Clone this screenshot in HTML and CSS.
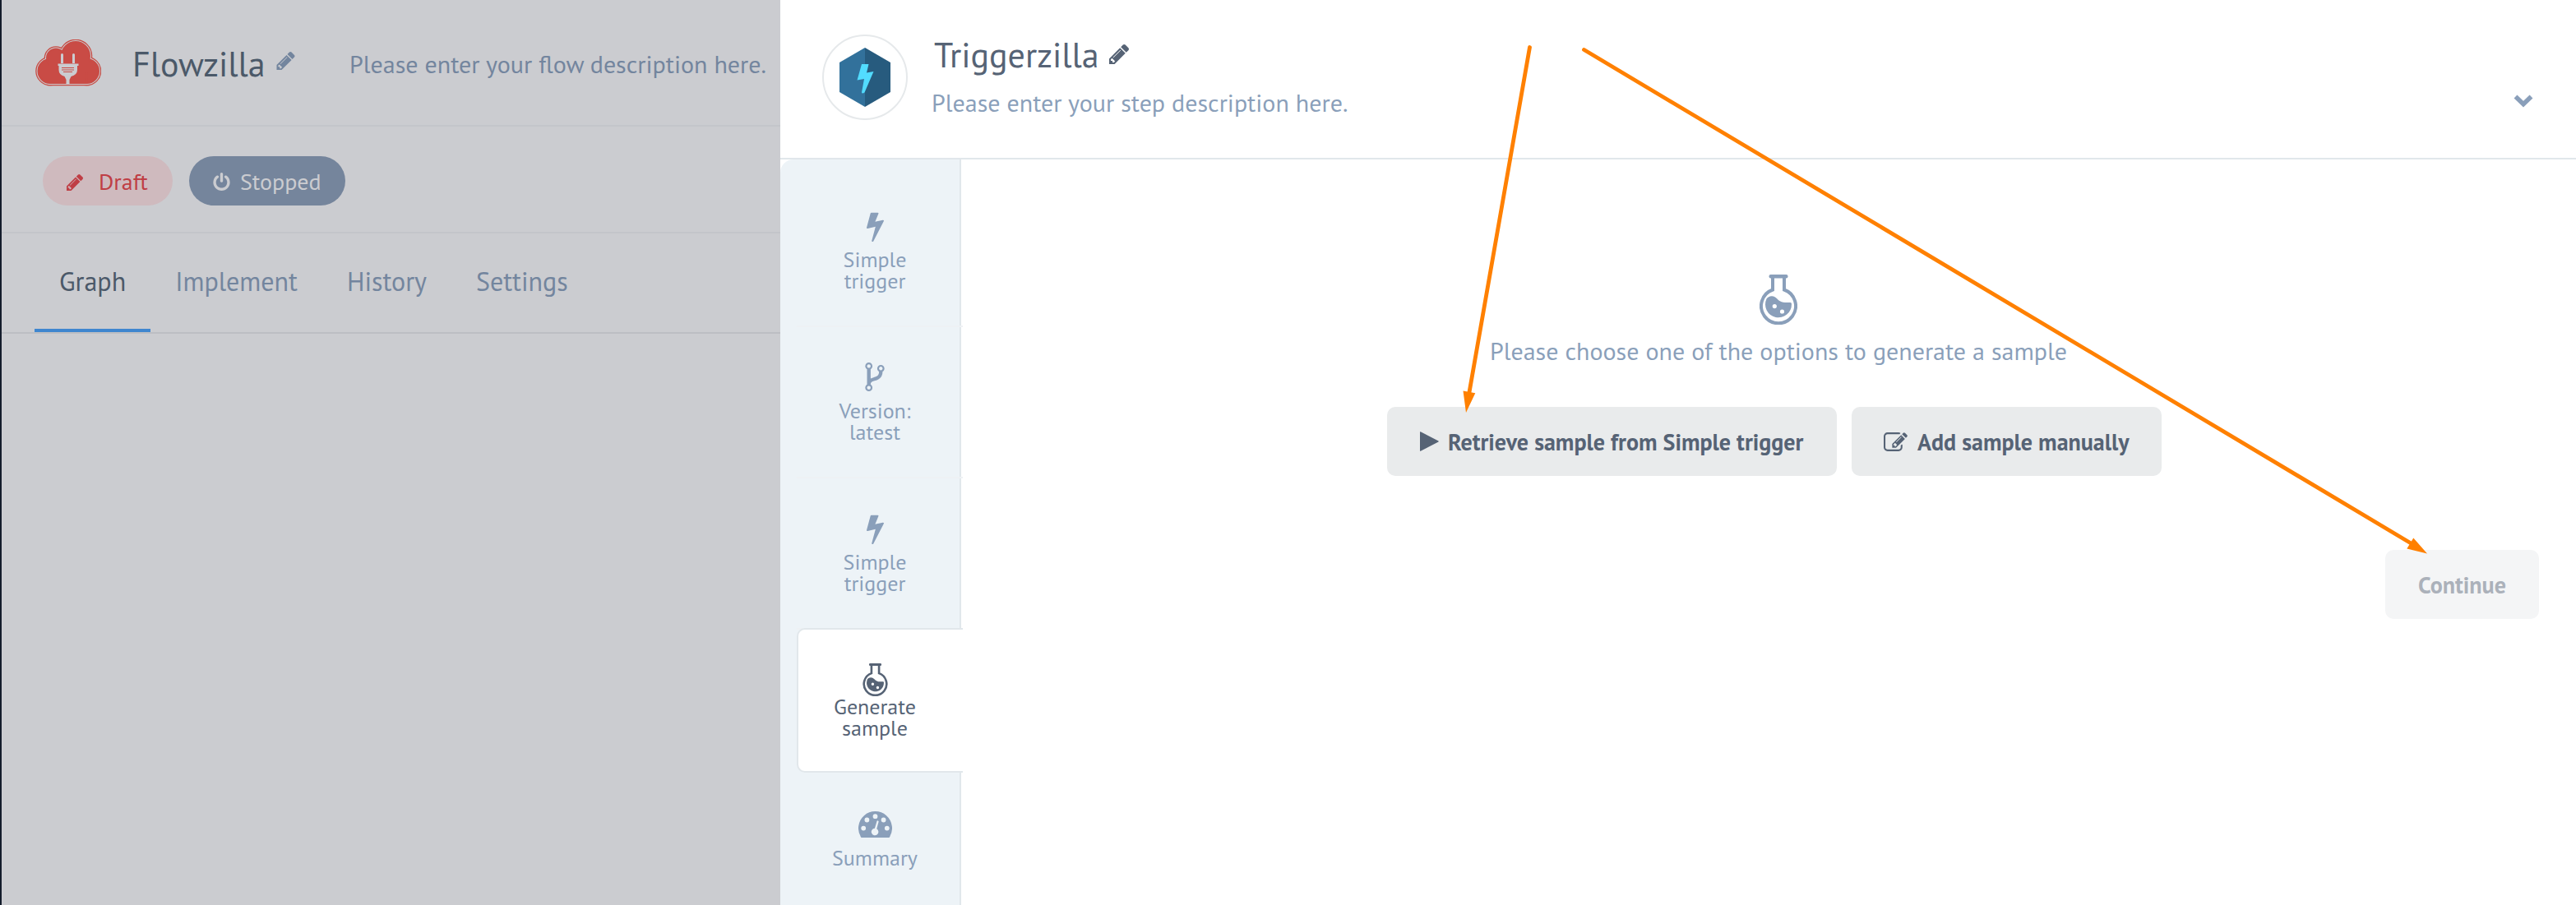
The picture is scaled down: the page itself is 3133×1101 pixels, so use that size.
FILE: index.html
```html
<!DOCTYPE html>
<html lang="en">
<head>
<meta charset="utf-8">
<title>Flowzilla</title>
<link rel="stylesheet" href="styles.css">
</head>
<body>
<svg class="defs" width="0" height="0" aria-hidden="true">
  <defs>
    <symbol id="pencil" viewBox="128 149 1516 1515"><path d="M491 1536l91-91-235-235-91 91v107h128v128h107zm523-928q0-22-22-22-10 0-17 7l-542 542q-7 7-7 17 0 22 22 22 10 0 17-7l542-542q7-7 7-17zm-54-192l416 416-832 832h-416v-416zm683 96q0 53-37 90l-166 166-416-416 166-165q36-38 90-38 53 0 91 38l235 234q37 39 37 91z"/></symbol>
    <symbol id="bolt" viewBox="448 0 897 1792" preserveAspectRatio="none"><path d="M1333 566q18 20 7 44l-540 1157q-13 25-42 25-4 0-14-2-17-5-25.500-19t-4.500-30l197-808-406 101q-4 1-12 1-18 0-31-11-18-15-13-39l201-825q4-14 16-23t28-9h328q19 0 32 12.500t13 29.500q0 8-5 18l-171 463 396-98q8-2 12-2 19 0 34 15z"/></symbol>
    <symbol id="fork" viewBox="384 128 1024 1536"><path d="M672 1472q0-40-28-68t-68-28-68 28-28 68 28 68 68 28 68-28 28-68zm0-1152q0-40-28-68t-68-28-68 28-28 68 28 68 68 28 68-28 28-68zm640 128q0-40-28-68t-68-28-68 28-28 68 28 68 68 28 68-28 28-68zm96 0q0 52-26 96.500t-70 69.500q-2 287-226 414-67 38-203 81-128 40-169.500 71t-41.500 100v26q44 25 70 69.500t26 96.500q0 80-56 136t-136 56-136-56-56-136q0-52 26-96.500t70-69.500v-820q-44-25-70-69.500t-26-96.500q0-80 56-136t136-56 136 56 56 136q0 52-26 96.500t-70 69.500v497q54-26 154-57 55-17 87.500-29.500t70.500-31 59-39.500 40.500-51 28-69.500 8.500-91.500q-44-25-70-69.500t-26-96.500q0-80 56-136t136-56 136 56 56 136z"/></symbol>
    <symbol id="power" viewBox="128 0 1536 1664"><path d="M1664 896q0 156-61 298t-164 245-245 164-298 61-298-61-245-164-164-245-61-298q0-182 80.500-343t226.500-270q43-32 95.500-25t83.500 50q32 42 24.500 94.500t-49.500 84.500q-98 74-151.500 181t-53.500 228q0 104 40.500 198.500t109.500 163.500 163.500 109.500 198.500 40.500 198.500-40.500 163.500-109.500 109.500-163.500 40.500-198.500q0-121-53.500-228t-151.500-181q-42-32-49.500-84.500t24.500-94.500q31-43 84-50t95 25q146 109 226.500 270t80.500 343zm-640-768v640q0 52-38 90t-90 38-90-38-38-90v-640q0-52 38-90t90-38 90 38 38 90z"/></symbol>
    <symbol id="edit" viewBox="0 128 1792 1408"><path d="M888 1184l116-116-152-152-116 116v56h96v96h56zm440-720q-16-16-33 1l-350 350q-17 17-1 33t33-1l350-350q17-17 1-33zm80 594v190q0 119-84.500 203.500t-203.500 84.500h-832q-119 0-203.500-84.500t-84.500-203.500v-832q0-119 84.500-203.500t203.500-84.500h832q63 0 117 25 15 7 18 23 3 17-9 29l-49 49q-14 14-32 8-23-6-45-6h-832q-66 0-113 47t-47 113v832q0 66 47 113t113 47h832q66 0 113-47t47-113v-126q0-13 9-22l64-64q15-15 35-7t20 29zm-96-738l288 288-672 672h-288v-288zm444 132l-92 92-288-288 92-92q28-28 68-28t68 28l152 152q28 28 28 68t-28 68z"/></symbol>
    <symbol id="flask" viewBox="0 0 46 61">
      <path d="M16 3V18.500A21 21 0 1 0 30 18.500V3" fill="none" stroke="currentColor" stroke-width="4"/>
      <rect x="11.500" y="0" width="23" height="4.600" rx="2"/>
      <path fill-rule="evenodd" d="M8.500 29.500C10.500 26.500 15 24.800 19 27.500C22.500 30 24.500 34 31 34H37.500Q39 34 39 36A16 16 0 1 1 8.500 29.500ZM18.300 36a2.600 2.600 0 1 0 0 5.200a2.600 2.600 0 1 0 0-5.200ZM27.500 42.400a2.600 2.600 0 1 0 0 5.200a2.600 2.600 0 1 0 0-5.200Z"/>
    </symbol>
    <symbol id="gauge" viewBox="0 0 41 32"><path fill-rule="evenodd" d="M3.500 32A20.500 20.500 0 1 1 37.500 32ZM20.500 3.300a2.900 2.900 0 1 0 0 5.800a2.900 2.900 0 1 0 0-5.800ZM10.400 7.600a2.900 2.900 0 1 0 0 5.800a2.900 2.900 0 1 0 0-5.800ZM30.600 7.600a2.900 2.900 0 1 0 0 5.800a2.900 2.900 0 1 0 0-5.800ZM6.200 17.700a2.900 2.900 0 1 0 0 5.800a2.900 2.900 0 1 0 0-5.800ZM34.800 17.700a2.900 2.900 0 1 0 0 5.800a2.900 2.900 0 1 0 0-5.800ZM22.400 12.300Q22.800 11.200 23.800 11.400Q24.800 11.800 24.600 12.800L22.300 21.300A4.300 4.300 0 1 1 19.900 20.700Z"/></symbol>
    <g id="cloud">
      <circle cx="18" cy="38.500" r="14.500"/><circle cx="62.500" cy="38.500" r="14.500"/><circle cx="25" cy="22.500" r="11"/><circle cx="49" cy="20" r="17"/><path d="M18 20H63V40L62.500 53H18Z"/>
    </g>
  </defs>
</svg>

<div class="app">
  <section class="flow">
    <header class="flow-head">
      <svg class="logo" viewBox="0 0 80 57">
        <use href="#cloud" fill="#c74b43" stroke="#c74b43" stroke-width="6.600"/>
        <use href="#cloud" fill="#cbccd0" stroke="#cbccd0" stroke-width="4"/>
        <use href="#cloud" fill="#c94b45" stroke="#c94b45" stroke-width="2"/>
        <path fill="#cbccd0" d="M31 18.500a1.500 1.500 0 0 1 3 0V29h-3ZM45 18.500a1.500 1.500 0 0 1 3 0V29h-3ZM27.500 29.500h25v2.500h-1.500v5q0 6-7.500 8l-2 4v6h-4v-6l-2-4q-7-2-7-8v-5h-1Z"/>
        <path stroke="#c94b45" stroke-width="1" d="M32 34.500h15M32 37h15M34 39.500h11"/>
      </svg>
      <h1 class="flow-title">Flowzilla</h1>
      <svg class="ico flow-edit"><use href="#pencil"/></svg>
      <p class="flow-desc">Please enter your flow description here.</p>
    </header>
    <div class="status">
      <span class="pill draft"><svg class="ico"><use href="#pencil"/></svg><span>Draft</span></span>
      <span class="pill stopped"><svg class="ico"><use href="#power"/></svg><span>Stopped</span></span>
    </div>
    <nav class="tabs">
      <a class="tab active">Graph</a>
      <a class="tab">Implement</a>
      <a class="tab">History</a>
      <a class="tab">Settings</a>
    </nav>
  </section>

  <section class="panel">
    <header class="panel-head">
      <div class="avatar">
        <svg viewBox="0 0 62 72"><path fill="#32719b" d="M31 0V72L0 54V18Z"/><path fill="#275b7e" d="M31 0L62 18V54L31 72Z"/><path fill="#52dcff" d="M27 20h8.500l-2.500 10.500 8.500-1.500-11 25.500q-3 2-3.500 0l3-16.500-8.500 1.500Z"/></svg>
      </div>
      <div class="step">
        <div class="step-line"><h2 class="step-title">Triggerzilla</h2><svg class="ico step-edit"><use href="#pencil"/></svg></div>
        <p class="step-desc">Please enter your step description here.</p>
      </div>
      <svg class="chevron" viewBox="0 0 24 16"><path d="M2.500 2.500L12 11.700L21.500 2.500" fill="none" stroke="currentColor" stroke-width="5.600"/></svg>
    </header>
    <div class="panel-body">
      <aside class="side">
        <div class="item"><svg class="bolt"><use href="#bolt"/></svg><span class="label">Simple<br>trigger</span></div>
        <div class="item"><svg class="fork"><use href="#fork"/></svg><span class="label">Version:<br>latest</span></div>
        <div class="item"><svg class="bolt"><use href="#bolt"/></svg><span class="label">Simple<br>trigger</span></div>
        <div class="item current"><svg class="flask"><use href="#flask"/></svg><span class="label">Generate<br>sample</span></div>
        <div class="item summary"><svg class="gauge"><use href="#gauge"/></svg><span class="label">Summary</span></div>
      </aside>
      <main class="content">
        <svg class="flask-big"><use href="#flask"/></svg>
        <p class="prompt">Please choose one of the options to generate a sample</p>
        <div class="choices">
          <button class="btn retrieve"><svg class="play" viewBox="0 0 23 24"><path d="M0 .500Q0 0 .800 .300L22.500 11.500Q23 12 22.500 12.500L.800 23.700Q0 24 0 23.500Z"/></svg><span>Retrieve sample from Simple trigger</span></button>
          <button class="btn manual"><svg class="edit"><use href="#edit"/></svg><span>Add sample manually</span></button>
        </div>
        <button class="btn continue" disabled>Continue</button>
      </main>
    </div>
  </section>
</div>

<svg class="arrows" viewBox="0 0 3133 1101">
  <path d="M1860.500 57.500L1786.500 480M1926.500 60.500L2934 662" stroke="#ff8000" stroke-width="4.800" stroke-linecap="round"/>
  <path fill="#ff8000" d="M1783 502L1779.500 475.500L1794.300 478.300ZM2952 673.500L2935.300 654.500L2927.300 667.500Z"/>
</svg>
</body>
</html>
```
FILE: styles.css
```css
* { box-sizing: border-box; }
body { margin: 0; width: 3133px; height: 1101px; overflow: hidden; background: #fff; font-family: "PT Sans", Lato, sans-serif; }
h1, h2, p { margin: 0; font-weight: 400; white-space: nowrap; }
svg { display: block; fill: currentColor; flex: none; }
.defs { position: absolute; }
.app { display: grid; grid-template-columns: 949px 1fr; height: 1101px; }

.flow { background: #cbccd0; border-left: 2px solid #141c2c; color: #73859e; overflow: hidden; }
.flow-head { display: flex; height: 154px; border-bottom: 2px solid #c3c5ca; padding-left: 41px; }
.logo { width: 80px; height: 57px; margin-top: 48px; }
.flow-title { width: 174px; margin: 53px 0 0 38px; font-size: 42px; line-height: 50px; color: #4b5969; }
.flow-edit { width: 23px; height: 22px; margin-top: 63px; margin-left: 1px; }
.flow-desc { margin: 60px 0 0 66px; font-size: 30px; line-height: 36px; }
.status { display: flex; gap: 20px; height: 130px; padding: 36px 0 0 50px; border-bottom: 2px solid #c3c5ca; }
.pill { display: flex; align-items: center; height: 60px; border-radius: 30px; font-size: 28px; }
.draft { width: 158px; padding-left: 29px; gap: 19px; background: #cfbabe; color: #bf3e45; }
.draft .ico { width: 20px; height: 20px; margin-top: 4px; }
.stopped { width: 190px; padding-left: 29px; gap: 12px; background: #75859c; color: #cbccd0; }
.stopped .ico { width: 21px; height: 22px; margin-top: 2px; }
.tabs { display: flex; height: 122px; padding-left: 40px; border-bottom: 2px solid #bcbec3; font-size: 32px; }
.tab { display: block; height: 120px; padding: 0 30px; line-height: 116px; }
.tab.active { color: #4b5969; border-bottom: 4px solid #3f86cf; }

.panel { display: flex; flex-direction: column; background: #fff; color: #8a9fba; }
.panel-head { display: flex; height: 194px; border-bottom: 2px solid #e1e7eb; padding-left: 51px; }
.avatar { width: 104px; height: 104px; margin-top: 42px; border: 2px solid #e6e9eb; border-radius: 50%; display: grid; place-items: center; }
.avatar svg { width: 62px; height: 72px; }
.step { margin: 42px 0 0 29px; width: 1924px; }
.step-line { display: flex; height: 60px; padding-left: 3px; color: #566375; }
.step-title { width: 213px; font-size: 42px; line-height: 50px; }
.step-edit { width: 24px; height: 24px; margin-top: 12px; }
.step-desc { margin-top: 5px; font-size: 30px; line-height: 36px; }
.chevron { width: 24px; height: 16px; margin-top: 115px; }
.panel-body { display: flex; flex: 1; }

.side { width: 220px; padding: 20px 0 0 20px; background: #edf3f7; border-right: 2px solid #e1e7eb; border-top-left-radius: 16px; }
.item { display: flex; flex-direction: column; align-items: center; width: 202px; height: 184px; padding: 42px 12px 0 0; border-bottom: 2px solid #eef1f4; font-size: 26px; line-height: 26px; text-align: center; }
.bolt { width: 21px; height: 38px; }
.fork { width: 24px; height: 35px; margin: 1px 0 2px; }
.item .label { margin-top: 9px; }
.item.current { height: 176px; margin-top: -2px; margin-bottom: 2px; padding: 41px 14px 0 0; border: 2px solid #e1e7eb; border-right: 0; border-radius: 10px 0 0 10px; background: #fff; color: #566375; }
.flask { width: 31px; height: 40px; }
.item.current .label { margin-top: 0; }
.item.summary { padding-top: 45px; border: 0; }
.gauge { width: 41px; height: 32px; }
.item.summary .label { margin-top: 12px; }

.content { flex: 1; display: flex; flex-direction: column; align-items: center; padding-top: 140px; }
.flask-big { width: 46px; height: 61px; margin-right: -24px; }
.prompt { margin: 13px -24px 0 0; font-size: 30px; line-height: 38px; }
.choices { display: flex; gap: 18px; margin: 49px -14px 0 0; }
.btn { display: flex; align-items: center; height: 84px; border: 0; border-radius: 10px; background: #e9ebec; color: #566375; font: 700 28px "PT Sans", Lato, sans-serif; white-space: nowrap; }
.retrieve { width: 547px; padding: 0 0 0 40px; }
.manual { width: 377px; padding: 0 0 0 39px; }
.play { width: 23px; height: 24px; margin-right: 11px; }
.edit { width: 29px; height: 23px; margin-right: 12px; }
.continue { align-self: flex-end; width: 187px; justify-content: center; margin: 90px 45px 0 0; background: #f4f5f6; color: #abb1ba; }

.arrows { position: absolute; left: 0; top: 0; width: 3133px; height: 1101px; pointer-events: none; }
```
